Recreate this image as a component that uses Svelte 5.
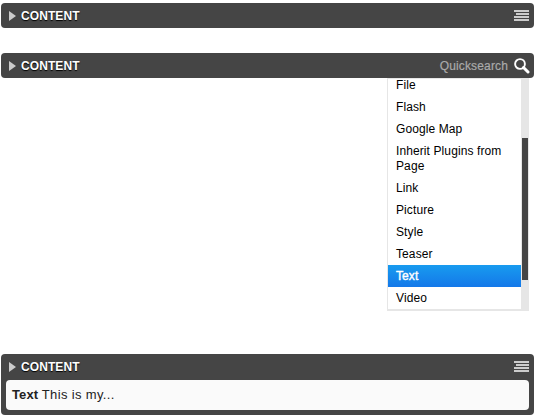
<script>
  const plugins = ['File', 'Flash', 'Google Map', 'Inherit Plugins from Page', 'Link', 'Picture', 'Style', 'Teaser', 'Text', 'Video'];
  const selected = 'Text';
</script>

{#snippet heading()}
  <svg class="arrow" width="7" height="10" viewBox="0 0 7 10"><path d="M0 0L7 5L0 10Z" fill="#ccc" /></svg>
  <span class="title">CONTENT</span>
{/snippet}

{#snippet lines()}
  <svg class="lines" width="15" height="11" viewBox="0 0 15 11" shape-rendering="crispEdges">
    <path d="M0 0H15V2H0ZM2 3H15V5H2ZM0 6H15V8H0ZM0 9H15V11H0Z" fill="#ccc" />
  </svg>
{/snippet}

<main>
  <section class="panel first">
    <header>{@render heading()}{@render lines()}</header>
  </section>

  <section class="panel">
    <header>
      {@render heading()}
      <span class="search">Quicksearch</span>
      <svg class="glass" width="16" height="16" viewBox="0 0 16 16" fill="none" stroke="#fff">
        <circle cx="6" cy="6" r="4.9" stroke-width="1.9" />
        <path d="M9.5 9.5L14 14" stroke-width="3" stroke-linecap="round" />
      </svg>
    </header>
  </section>

  <div class="menu">
    <div class="viewport">
      <ul>
        {#each plugins as plugin}
          <li class:selected={plugin === selected}>{plugin}</li>
        {/each}
      </ul>
    </div>
    <div class="track"><div class="thumb"></div></div>
  </div>

  <section class="panel last">
    <header>{@render heading()}{@render lines()}</header>
    <div class="plugin"><b>Text</b> <span>This is my...</span></div>
  </section>
</main>

<style>
  :global(body) { margin: 0; background: #fff; }
  main {
    width: 534px;
    height: 417px;
    padding: 3px 0 0 1px;
    box-sizing: border-box;
    font: 12px/15px "Liberation Sans", Arial, sans-serif;
  }
  .panel { background: #454545; border-radius: 4px; }
  .first { margin-bottom: 25px; }
  header { display: flex; align-items: center; height: 25px; padding: 0 5px 0 8px; }
  .title {
    padding-top: 2px;
    margin-left: 5px;
    margin-right: auto;
    color: #fff;
    font-weight: bold;
    letter-spacing: 0.08px;
    text-shadow: 0 1px 1px #000;
  }
  .search {
    padding-top: 2px;
    color: #aaa;
    letter-spacing: 0.15px;
    margin-right: 6px;
    -webkit-text-stroke: 0.2px #aaa;
  }
  .glass { margin-right: -1px; }
  .menu {
    display: flex;
    box-sizing: border-box;
    width: 142px;
    height: 233px;
    margin-left: 386px;
    border: solid #e6e6e6;
    border-width: 1px 0 2px 1px;
  }
  .viewport { width: 133px; height: 230px; overflow: hidden; }
  ul { list-style: none; margin: -5px 0 0; padding: 0; }
  li { padding: 4px 8px 3px; color: #000; letter-spacing: 0.1px; }
  .selected {
    color: #fff;
    background: linear-gradient(#189bef, #1478e9);
    -webkit-text-stroke: 0.4px #fff;
  }
  .track { width: 6px; padding: 59px 1px 0; background: #e6e6e6; }
  .thumb { height: 142px; background: #454545; }
  .last { height: 61px; margin-top: 43px; }
  .plugin {
    height: 30px;
    margin: 1px 5px 0;
    padding-left: 6px;
    border-radius: 4px;
    background: #fafafa;
    color: #222;
    font-size: 13px;
    line-height: 30px;
  }
  .plugin b { letter-spacing: 0.1px; }
  .plugin span { letter-spacing: 0.35px; }
</style>
